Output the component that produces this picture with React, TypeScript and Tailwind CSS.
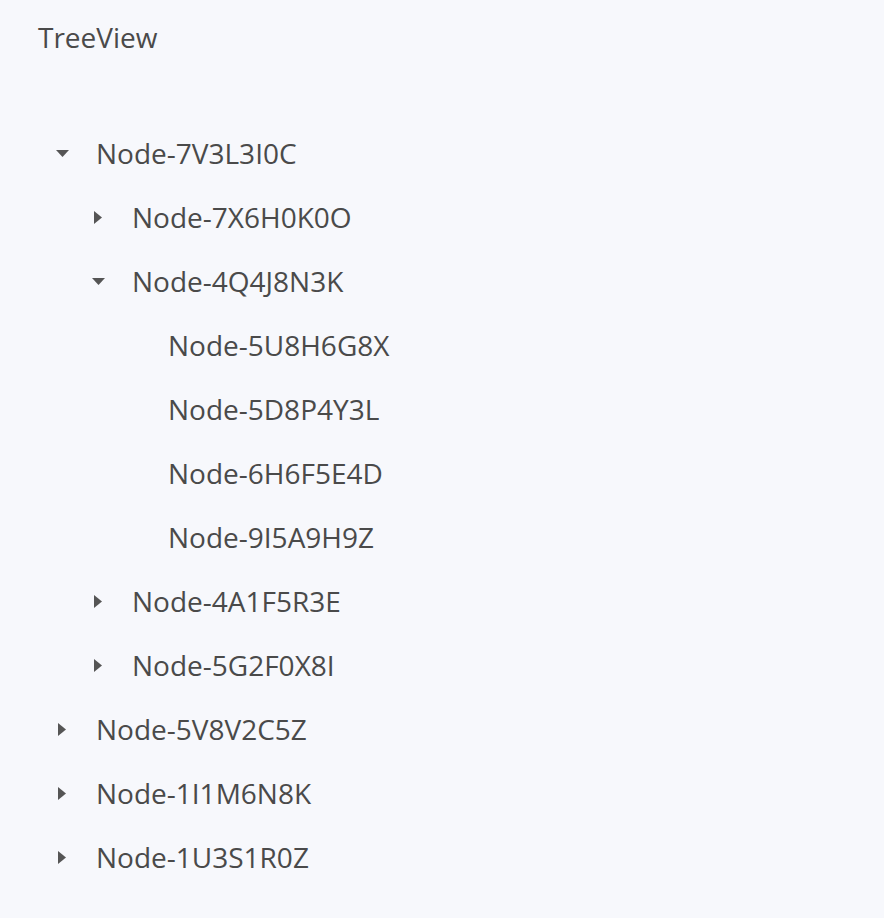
import React from "react";

type TreeNode = {
  label: string;
  open?: boolean;
  children?: TreeNode[];
};

const tree: TreeNode[] = [
  {
    label: "Node-7V3L3I0C",
    open: true,
    children: [
      { label: "Node-7X6H0K0O", children: [] },
      {
        label: "Node-4Q4J8N3K",
        open: true,
        children: [
          { label: "Node-5U8H6G8X" },
          { label: "Node-5D8P4Y3L" },
          { label: "Node-6H6F5E4D" },
          { label: "Node-9I5A9H9Z" },
        ],
      },
      { label: "Node-4A1F5R3E", children: [] },
      { label: "Node-5G2F0X8I", children: [] },
    ],
  },
  { label: "Node-5V8V2C5Z", children: [] },
  { label: "Node-1I1M6N8K", children: [] },
  { label: "Node-1U3S1R0Z", children: [] },
];

const Caret = ({ open }: { open?: boolean }) =>
  open ? (
    <svg width="13" height="7" viewBox="0 0 13 7" className="fill-[#555555]">
      <path d="M0 0 L13 0 L6.5 7 Z" />
    </svg>
  ) : (
    <svg width="8" height="13" viewBox="0 0 8 13" className="fill-[#555555]">
      <path d="M0 0 L8 6.5 L0 13 Z" />
    </svg>
  );

const Row = ({ node, level }: { node: TreeNode; level: number }) => {
  const hasChildren = node.children !== undefined;
  return (
    <>
      <div className="flex h-16 items-center" style={{ paddingLeft: 50 + level * 36 }}>
        <span className="flex w-6 items-center justify-center">
          {hasChildren && <Caret open={node.open} />}
        </span>
        <span className="ml-[22px] text-[28px] leading-10 text-[#4a4a4a]">{node.label}</span>
      </div>
      {node.open &&
        node.children?.map((c) => <Row key={c.label} node={c} level={level + 1} />)}
    </>
  );
};

export default function App() {
  return (
    <div className="min-h-[918px] w-full bg-[#f7f8fc] font-['Open_Sans',sans-serif]">
      <h1 className="pl-[38px] pt-[17px] text-[28px] leading-10 text-[#4a4a4a]">TreeView</h1>
      <div className="mt-[64px]">
        {tree.map((n) => (
          <Row key={n.label} node={n} level={0} />
        ))}
      </div>
    </div>
  );
}
